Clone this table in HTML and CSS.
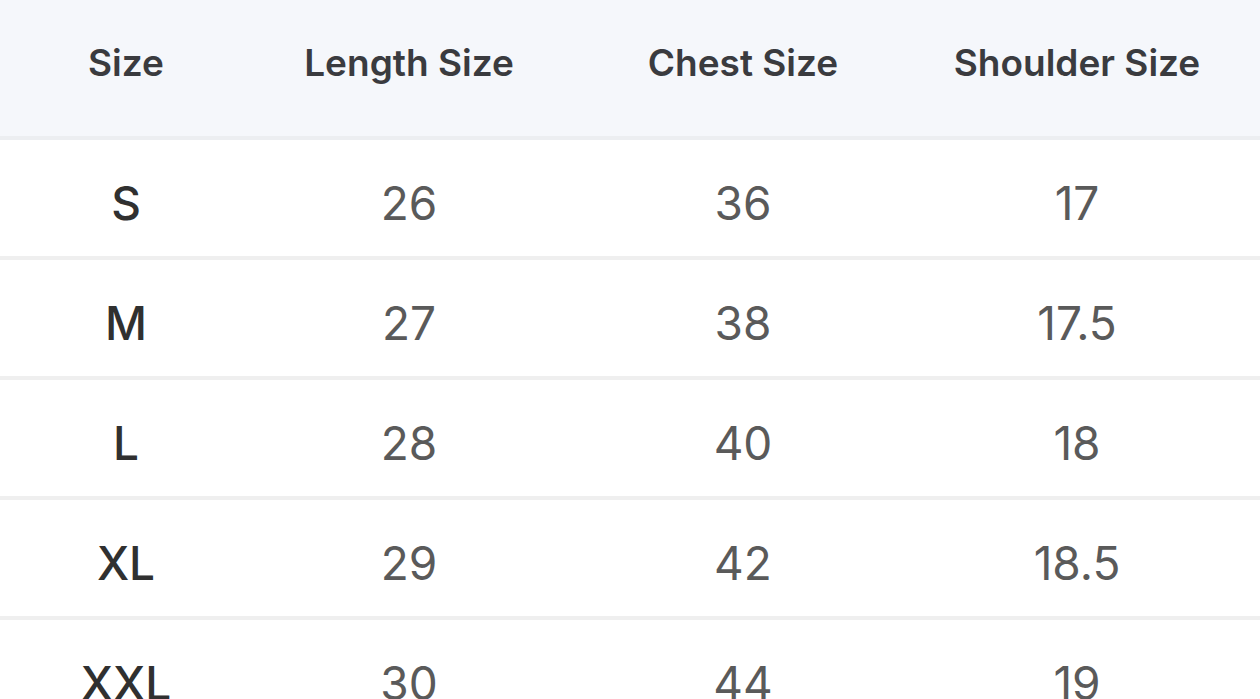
FILE: index.html
```html
<!DOCTYPE html>
<html>
<head>
<meta charset="utf-8">
<link rel="stylesheet" href="styles.css">
</head>
<body>
<div class="chart">
  <div class="row head">
    <div class="cell">Size</div>
    <div class="cell">Length Size</div>
    <div class="cell">Chest Size</div>
    <div class="cell">Shoulder Size</div>
  </div>
  <div class="row">
    <div class="cell label">S</div>
    <div class="cell">26</div>
    <div class="cell">36</div>
    <div class="cell">17</div>
  </div>
  <div class="row">
    <div class="cell label">M</div>
    <div class="cell">27</div>
    <div class="cell">38</div>
    <div class="cell">17.5</div>
  </div>
  <div class="row">
    <div class="cell label">L</div>
    <div class="cell">28</div>
    <div class="cell">40</div>
    <div class="cell">18</div>
  </div>
  <div class="row">
    <div class="cell label">XL</div>
    <div class="cell">29</div>
    <div class="cell">42</div>
    <div class="cell">18.5</div>
  </div>
  <div class="row">
    <div class="cell label">XXL</div>
    <div class="cell">30</div>
    <div class="cell">44</div>
    <div class="cell">19</div>
  </div>
</div>
</body>
</html>
```
FILE: styles.css
```css
html, body {
  margin: 0;
  padding: 0;
  background: #ffffff;
  overflow: hidden;
}
body {
  width: 1260px;
  height: 699px;
  font-family: Inter, "Noto Sans", sans-serif;
}
.chart {
  display: flex;
  flex-direction: column;
}
.row {
  display: grid;
  grid-template-columns: 252px 314px 354px 314px 26px;
  height: 116px;
  align-items: center;
  border-bottom: 4px solid #efefef;
  color: #5a5a5a;
  font-size: 46px;
  font-weight: 400;
}
.row .cell {
  text-align: center;
  padding-top: 10px;
}
.row.head {
  height: 136px;
  background: #f5f7fb;
  border-bottom: 4px solid #eceef1;
  color: #3a3b3f;
  font-size: 37px;
  font-weight: 600;
  align-items: start;
}
.row.head .cell {
  padding-top: 40px;
}
.cell.label {
  color: #303030;
  font-weight: 500;
}
```
